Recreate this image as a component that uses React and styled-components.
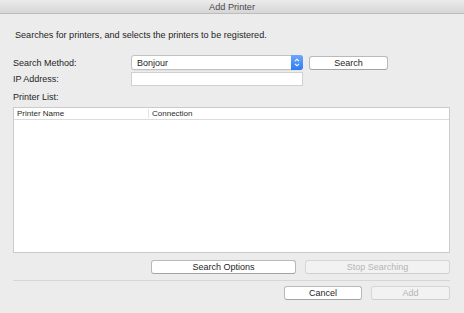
import React from "react";
import styled, { createGlobalStyle } from "styled-components";

const GlobalStyle = createGlobalStyle`
  html, body {
    margin: 0;
    padding: 0;
    background: #ececec;
  }
  * {
    box-sizing: border-box;
  }
`;

const Window = styled.div`
  width: 464px;
  height: 313px;
  background: #ececec;
  display: flex;
  flex-direction: column;
  font-family: "Liberation Sans", Arial, sans-serif;
  font-size: 9px;
  color: #1e1e1e;
  overflow: hidden;
`;

const TitleBar = styled.div`
  height: 14px;
  flex-shrink: 0;
  background: linear-gradient(#ebebeb, #d6d6d6);
  border-bottom: 1px solid #bcbcbc;
  display: flex;
  align-items: center;
  justify-content: center;
  font-size: 9.2px;
  color: #4a4a4a;
`;

const Content = styled.div`
  padding: 15px 14px 0 13px;
  display: flex;
  flex-direction: column;
  & > * {
    flex-shrink: 0;
  }
`;

const Description = styled.div`
  line-height: 12px;
  padding-left: 2px;
  font-size: 9.1px;
`;

const FormGrid = styled.div`
  margin-top: 14px;
  display: grid;
  grid-template-columns: 112px 172px 79px;
  column-gap: 6px;
  row-gap: 2px;
  align-items: center;
`;

const Label = styled.div`
  line-height: 12px;
`;

const SelectBox = styled.div`
  height: 15px;
  background: #fff;
  border: 1px solid #c2c2c2;
  border-radius: 3px;
  display: flex;
  align-items: center;
  padding-left: 5px;
  position: relative;
  box-shadow: 0 0.5px 0 rgba(0, 0, 0, 0.08);
`;

const Stepper = styled.div`
  position: absolute;
  top: -1px;
  right: -1px;
  bottom: -1px;
  width: 12px;
  border-radius: 0 3px 3px 0;
  background: linear-gradient(#6ba8f8, #2f7bf2);
  display: flex;
  align-items: center;
  justify-content: center;
`;

const TextInput = styled.div`
  height: 14px;
  background: #fff;
  border: 1px solid #d0d0d0;
`;

const Button = styled.button`
  height: 14px;
  width: ${({ $w }) => $w}px;
  padding: 0;
  font-family: inherit;
  font-size: 9px;
  line-height: 12px;
  border-radius: 3px;
  border: 1px solid ${({ disabled }) => (disabled ? "#d6d6d6" : "#b9b9b9")};
  border-bottom-color: ${({ disabled }) => (disabled ? "#d0d0d0" : "#a4a4a4")};
  background: ${({ disabled }) => (disabled ? "#f2f2f2" : "#fff")};
  color: ${({ disabled }) => (disabled ? "#b5b5b5" : "#1e1e1e")};
`;

const ListLabel = styled(Label)`
  margin-top: 5px;
`;

const Table = styled.div`
  margin-top: 4px;
  height: 146px;
  background: #fff;
  border: 1px solid #cbcbcb;
  display: flex;
  flex-direction: column;
`;

const HeaderRow = styled.div`
  height: 12px;
  border-bottom: 1px solid #dcdcdc;
  display: grid;
  grid-template-columns: 134px 1fr;
  font-size: 8px;
  color: #2a2a2a;
`;

const HeaderCell = styled.div`
  display: flex;
  align-items: center;
  padding-left: 3px;
  border-left: ${({ $first }) => ($first ? "none" : "1px solid #e4e4e4")};
  margin: 1px 0;
`;

const ButtonRow = styled.div`
  margin-top: ${({ $top }) => $top}px;
  display: flex;
  justify-content: flex-end;
  gap: 9px;
`;

const Separator = styled.div`
  margin-top: 6px;
  height: 1px;
  background: #d6d6d6;
`;

export default function App() {
  return (
    <>
      <GlobalStyle />
      <Window>
        <TitleBar>Add Printer</TitleBar>
        <Content>
          <Description>
            Searches for printers, and selects the printers to be registered.
          </Description>
          <FormGrid>
            <Label>Search Method:</Label>
            <SelectBox>
              Bonjour
              <Stepper>
                <svg width="6" height="9" viewBox="0 0 6 9">
                  <path
                    d="M1 3.2 L3 1.2 L5 3.2 M1 5.8 L3 7.8 L5 5.8"
                    fill="none"
                    stroke="#fff"
                    strokeWidth="1.1"
                  />
                </svg>
              </Stepper>
            </SelectBox>
            <Button $w={79}>Search</Button>
            <Label>IP Address:</Label>
            <TextInput />
            <div />
          </FormGrid>
          <ListLabel>Printer List:</ListLabel>
          <Table>
            <HeaderRow>
              <HeaderCell $first>Printer Name</HeaderCell>
              <HeaderCell>Connection</HeaderCell>
            </HeaderRow>
          </Table>
          <ButtonRow $top={7}>
            <Button $w={145}>Search Options</Button>
            <Button $w={145} disabled>
              Stop Searching
            </Button>
          </ButtonRow>
          <Separator />
          <ButtonRow $top={5}>
            <Button $w={78}>Cancel</Button>
            <Button $w={79} disabled>
              Add
            </Button>
          </ButtonRow>
        </Content>
      </Window>
    </>
  );
}
